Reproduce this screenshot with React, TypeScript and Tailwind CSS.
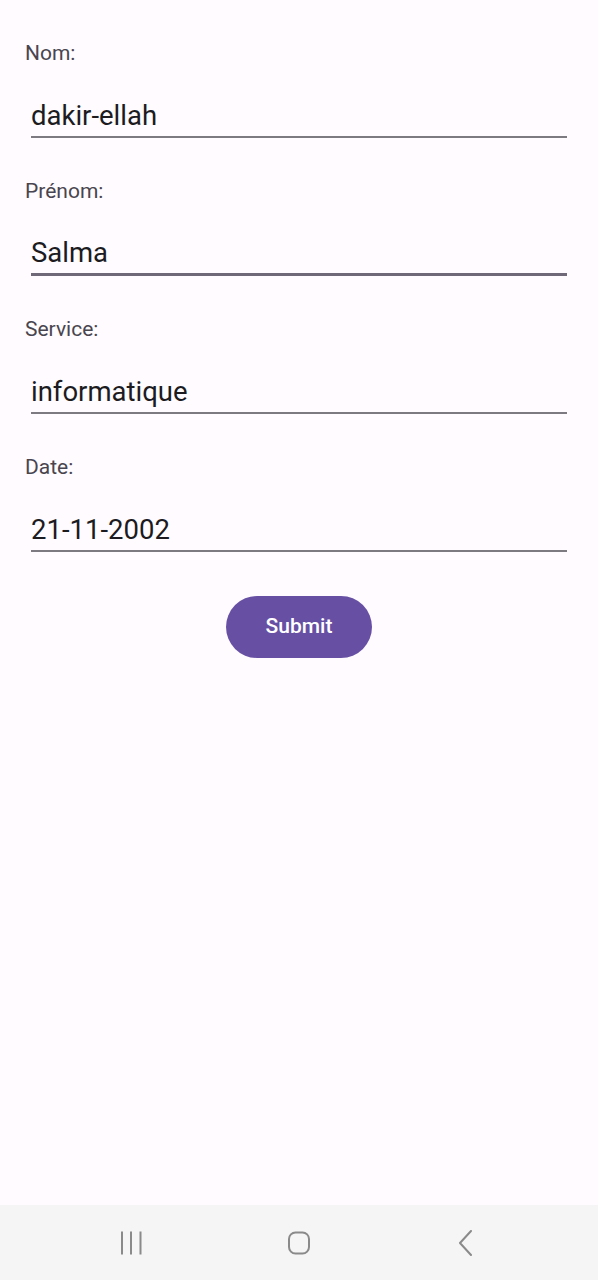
import { useState } from "react";

const FIELDS = [
  { label: "Nom:", value: "dakir-ellah" },
  { label: "Prénom:", value: "Salma", focused: true },
  { label: "Service:", value: "informatique" },
  { label: "Date:", value: "21-11-2002" },
];

function Field({ label, value, focused }: { label: string; value: string; focused?: boolean }) {
  const [v, setV] = useState(value);
  return (
    <div className="flex flex-col">
      <label className="pl-[25px] text-[21px] leading-[24px] text-[#49454f]">{label}</label>
      <input
        value={v}
        onChange={(e) => setV(e.target.value)}
        className={`mx-[31px] mt-[34px] h-[39px] bg-transparent pb-[5px] text-[27.5px] leading-[32px] text-[#1c1b1f] outline-none ${
          focused ? "border-b-[3px] border-[#6e6878]" : "border-b-2 border-[#7d7a82]"
        }`}
      />
    </div>
  );
}

export default function App() {
  return (
    <div className="flex h-screen flex-col bg-[#fffbfe] font-['Roboto',sans-serif]">
      <main className="flex flex-1 flex-col gap-[41px] pt-[41px]">
        {FIELDS.map((f) => (
          <Field key={f.label} {...f} />
        ))}
        <div className="flex justify-center pt-[3px]">
          <button
            type="button"
            className="h-[62px] w-[146px] rounded-full bg-[#6750a4] text-[21px] font-medium text-white"
          >
            Submit
          </button>
        </div>
      </main>

      {/* system nav bar */}
      <nav className="flex h-[75px] items-center justify-center gap-[143px] bg-[#f5f5f5]">
        <svg width="24" height="24" viewBox="0 0 24 24" className="text-[#8a8a8a]">
          <path d="M2 0.5v23M11 0.5v23M20.5 0.5v23" stroke="currentColor" strokeWidth="2" fill="none" />
        </svg>
        <svg width="24" height="24" viewBox="0 0 24 24" className="text-[#8a8a8a]">
          <rect x="2" y="1.5" width="20" height="21" rx="6.5" stroke="currentColor" strokeWidth="2" fill="none" />
        </svg>
        <svg width="24" height="26" viewBox="0 0 24 26" className="text-[#8a8a8a]">
          <path d="M17 1L6 13l11 12" stroke="currentColor" strokeWidth="2" fill="none" strokeLinecap="round" strokeLinejoin="round" />
        </svg>
      </nav>
    </div>
  );
}
